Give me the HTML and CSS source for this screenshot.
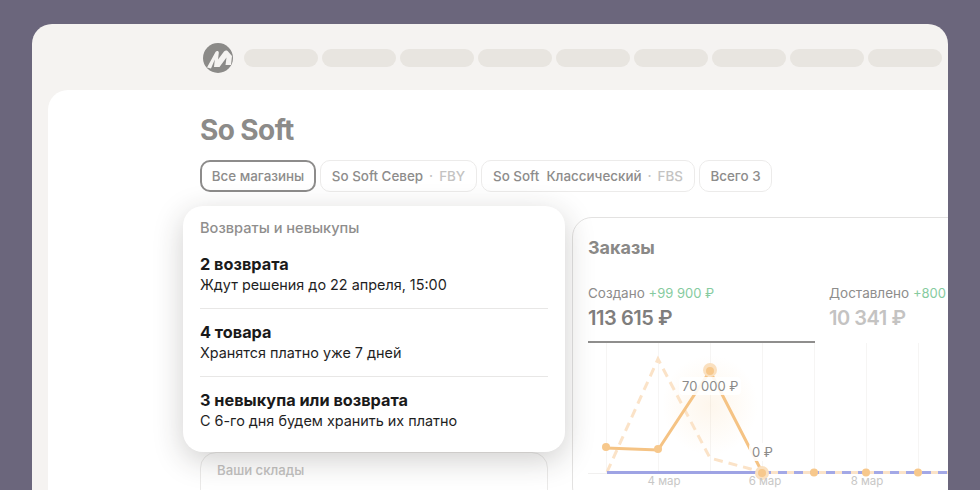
FILE: index.html
```html
<!DOCTYPE html>
<html lang="ru">
<head>
<meta charset="utf-8">
<title>So Soft</title>
<link rel="stylesheet" href="styles.css">
</head>
<body>
<div class="frame">
  <header class="topbar">
    <svg class="logo" viewBox="0 0 30 30" width="30" height="30"><circle cx="15" cy="15" r="15" fill="#8b8a88"/><path d="M4 24.5 L12.5 9 C13.5 7.5 16 7.8 15.8 10 L15 16.5 L21 8.5 C22.5 6.8 25 7.5 25.5 9 L29 13 L28 22 L22.5 22 L23.5 14.5 L16.5 24 L11 24 L11.8 16.5 L8 25.5 Z" fill="#f5f3f1"/></svg>
    <span class="pill"></span><span class="pill"></span><span class="pill"></span><span class="pill"></span><span class="pill"></span><span class="pill"></span><span class="pill"></span><span class="pill"></span><span class="pill"></span>
  </header>
  <main class="panel">
    <h1 class="title">So Soft</h1>
    <nav class="tabs">
      <span class="tab tab-active">Все магазины</span>
      <span class="tab tab-north">So Soft Север<span class="dot">·</span><span class="muted">FBY</span></span>
      <span class="tab tab-classic">So Soft&nbsp; Классический<span class="dot">·</span><span class="muted">FBS</span></span>
      <span class="tab tab-total">Всего 3</span>
    </nav>
    <div class="columns">
      <section class="left">
        <div class="pop">
          <div class="pop-head">Возвраты и невыкупы</div>
          <div class="item"><b>2 возврата</b><span>Ждут решения до 22 апреля, 15:00</span></div>
          <div class="item"><b>4 товара</b><span>Хранятся платно уже 7 дней</span></div>
          <div class="item"><b>3 невыкупа или возврата</b><span>С 6-го дня будем хранить их платно</span></div>
        </div>
        <div class="stock">Ваши склады</div>
      </section>
      <section class="orders">
        <h2 class="orders-title">Заказы</h2>
        <div class="metrics">
          <div class="metric metric-on">
            <div class="metric-label">Создано <em>+99 900 ₽</em></div>
            <div class="metric-value">113 615 ₽</div>
          </div>
          <div class="metric">
            <div class="metric-label">Доставлено <em>+800</em></div>
            <div class="metric-value metric-dim">10 341 ₽</div>
          </div>
        </div>
        <div class="chart">
          <svg class="plot" viewBox="0 0 360 149" width="360" height="149">
            <defs>
              <radialGradient id="glow"><stop offset="0" stop-color="#f7c98a" stop-opacity=".16"/><stop offset="1" stop-color="#f7c98a" stop-opacity="0"/></radialGradient>
            </defs>
            <g stroke="#f6f5f4" stroke-width="1">
              <path d="M18.5 0V130M70.5 0V130M122.5 0V130M174.5 0V130M226.5 0V130M278.5 0V130M330.5 0V130"/>
            </g>
            <ellipse cx="122" cy="62" rx="48" ry="50" fill="url(#glow)"/>
            <path d="M0 130.5H360" stroke="#f1f0ef"/>
            <path d="M19 129 L70 16 L122 115 L174 129" fill="none" stroke="#fbe3c8" stroke-width="3" stroke-dasharray="9 6"/>
            <path d="M19 129.5H174" stroke="#9ea3e4" stroke-width="3"/>
            <path d="M174 129.5H360" stroke="#fbe3c8" stroke-width="3"/>
            <path d="M174 129.5H360" stroke="#a3a8e6" stroke-width="3" stroke-dasharray="9 7"/>
            <path d="M18 105 L70 107 L122 28 L174 129" fill="none" stroke="#f5c384" stroke-width="3"/>
            <circle cx="122" cy="27" r="7" fill="#fae0bf"/>
            <circle cx="174" cy="130" r="7" fill="#fae0bf"/>
            <g fill="#f7c88c">
              <circle cx="18" cy="104" r="4"/><circle cx="70" cy="106" r="4"/><circle cx="122" cy="28" r="4"/><circle cx="174" cy="130" r="4"/><circle cx="226" cy="129.5" r="4"/><circle cx="278" cy="129.5" r="4"/><circle cx="330" cy="129.5" r="4"/>
            </g>
          </svg>
          <span class="tip tip-high">70 000 ₽</span>
          <span class="tip tip-zero">0 ₽</span>
          <span class="tick tick-a">4 мар</span>
          <span class="tick tick-b">6 мар</span>
          <span class="tick tick-c">8 мар</span>
        </div>
      </section>
    </div>
  </main>
</div>
</body>
</html>
```

FILE: styles.css
```css
* { box-sizing: border-box; }
html, body { margin: 0; height: 490px; overflow: hidden; }
body { background: #6b667c; font-family: "Inter", "Noto Sans", sans-serif; padding: 24px 32px 0; }

.frame { height: 466px; background: #f5f3f1; border-radius: 20px 20px 0 0; overflow: hidden; }

.topbar { height: 66px; display: flex; align-items: center; gap: 4px; padding-left: 171px; padding-top: 2px; }
.logo { flex: none; margin-right: 7px; margin-top: -1px; }
.pill { flex: none; width: 74px; height: 18px; border-radius: 9px; background: #e8e5e0; }

.panel { margin-left: 16px; height: 400px; background: #fff; border-radius: 20px 0 0 0; padding: 24px 0 0 152px; overflow: hidden; }

.title { margin: 0; font-size: 28px; line-height: 32px; font-weight: 700; color: #8c8b89; letter-spacing: -.6px; }

.tabs { display: flex; gap: 4px; margin-top: 14px; }
.tab { height: 32px; display: flex; align-items: center; justify-content: center; border: 1px solid #ecebea; border-radius: 10px; font-size: 13.4px; color: #8d8c8b; font-weight: 500; white-space: nowrap; }
.tab-active { width: 116px; border: 2px solid #8d8c8b; }
.tab-north { width: 157px; }
.tab-classic { width: 214px; }
.tab-total { width: 73px; }
.dot { margin: 0 6px; color: #c4c3c2; }
.muted { color: #c4c3c2; }

.columns { display: flex; gap: 24px; margin-top: 25px; align-items: flex-start; }
.left { position: relative; flex: none; width: 348px; padding-top: 235px; }

.pop { position: absolute; left: -17px; top: -11px; width: 382px; height: 246px; background: #fff; border-radius: 20px; padding: 12px 17px 0; box-shadow: 0 8px 30px rgba(40, 36, 30, .22); z-index: 2; }
.pop-head { font-size: 14.6px; line-height: 20px; color: #8f8e8d; font-weight: 500; margin-bottom: 3px; }
.item { height: 68px; padding-top: 13px; border-bottom: 1px solid #e8e7e6; display: flex; flex-direction: column; }
.item:last-child { border-bottom: 0; }
.item b { font-size: 16.3px; line-height: 20px; font-weight: 700; color: #1a1a1a; }
.item span { font-size: 14.4px; line-height: 20px; margin-top: 1px; color: #1f1f1f; }

.stock { height: 60px; border: 1px solid #ebeae9; border-radius: 16px; padding: 7px 16px; font-size: 13.2px; line-height: 20px; color: #c2c1c0; font-weight: 500; }

.orders { flex: none; width: 400px; height: 290px; border: 1px solid #e3e2e1; border-radius: 20px; padding: 18px 15px 0; }
.orders-title { margin: 0; font-size: 18px; line-height: 24px; font-weight: 700; color: #8a8987; }
.metrics { display: flex; margin-top: 23px; }
.metric { width: 227px; height: 60px; flex: none; }
.metric + .metric { padding-left: 14px; }
.metric-on { border-bottom: 2px solid #8f8e8d; }
.metric-label { font-size: 13.5px; line-height: 20px; color: #8e8d8c; white-space: nowrap; }
.metric-label em { font-style: normal; font-size: 13px; color: #86cba0; }
.metric-value { font-size: 20px; line-height: 26px; margin-top: 2px; font-weight: 600; color: #7f7e7d; letter-spacing: -.45px; white-space: nowrap; }
.metric-dim { color: #c4c3c2; }

.chart { position: relative; height: 149px; }
.plot { display: block; }
.tip { position: absolute; font-size: 13px; line-height: 16px; color: #8b8a89; background: rgba(255, 255, 255, .88); border-radius: 4px; padding: 1px 3px; white-space: nowrap; }
.tip-high { left: 91px; top: 34px; }
.tip-zero { left: 161px; top: 100px; }
.tick { position: absolute; top: 130px; font-size: 11.5px; line-height: 16px; color: #c8c7c6; white-space: nowrap; transform: translateX(-50%); }
.tick-a { left: 76px; }
.tick-b { left: 177px; }
.tick-c { left: 279px; }
```
